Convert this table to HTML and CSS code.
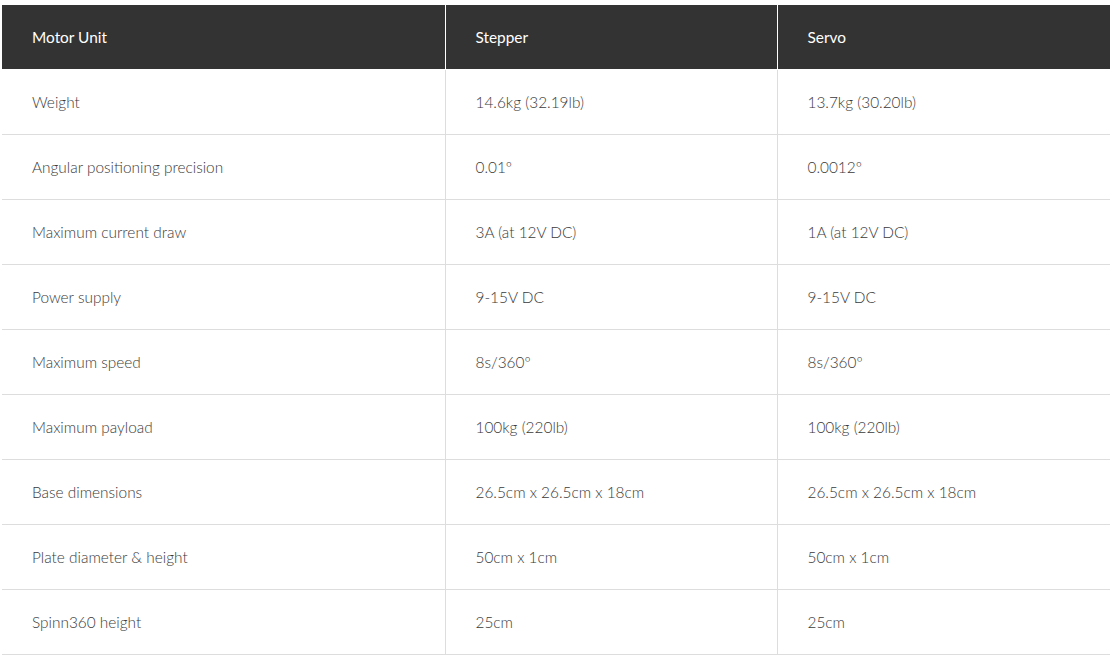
FILE: index.html
```html
<!DOCTYPE html>
<html>
<head>
<meta charset="utf-8">
<link rel="stylesheet" href="styles.css">
</head>
<body>
<div class="wrap">
<table class="spec">
  <colgroup><col class="c1"><col class="c2"><col class="c3"></colgroup>
  <thead>
    <tr><th>Motor Unit</th><th>Stepper</th><th>Servo</th></tr>
  </thead>
  <tbody>
    <tr><td>Weight</td><td>14.6kg (32.19lb)</td><td>13.7kg (30.20lb)</td></tr>
    <tr><td>Angular positioning precision</td><td>0.01º</td><td>0.0012º</td></tr>
    <tr><td>Maximum current draw</td><td>3A (at 12V DC)</td><td>1A (at 12V DC)</td></tr>
    <tr><td>Power supply</td><td>9-15V DC</td><td>9-15V DC</td></tr>
    <tr><td>Maximum speed</td><td>8s/360º</td><td>8s/360º</td></tr>
    <tr><td>Maximum payload</td><td>100kg (220lb)</td><td>100kg (220lb)</td></tr>
    <tr><td>Base dimensions</td><td>26.5cm x 26.5cm x 18cm</td><td>26.5cm x 26.5cm x 18cm</td></tr>
    <tr><td>Plate diameter &amp; height</td><td>50cm x 1cm</td><td>50cm x 1cm</td></tr>
    <tr><td>Spinn360 height</td><td>25cm</td><td>25cm</td></tr>
  </tbody>
</table>
</div>
</body>
</html>
```
FILE: styles.css
```css
html, body { margin: 0; padding: 0; background: #fff; }
.wrap { padding: 5px 5px 0 2px; }
.spec {
  width: 1108px;
  border-collapse: collapse;
  table-layout: fixed;
  font-family: Lato, "Open Sans", sans-serif;
  font-size: 15.4px;
}
.c1 { width: 443px; }
.c2 { width: 332px; }
.c3 { width: 333px; }
.spec th {
  background: #333333;
  color: #fff;
  font-weight: 400;
  text-align: left;
  height: 64px;
  padding: 0 0 0 30px;
  border-left: 1px solid #fff;
  border-bottom: 1px solid #fff;
}
.spec th:first-child { border-left: none; }
.spec td {
  color: #3a3a3a;
  font-weight: 300;
  height: 64px;
  padding: 0 0 0 30px;
  border-bottom: 1px solid #dddddd;
  border-left: 1px solid #dddddd;
}
.spec td:first-child { border-left: none; }
```
